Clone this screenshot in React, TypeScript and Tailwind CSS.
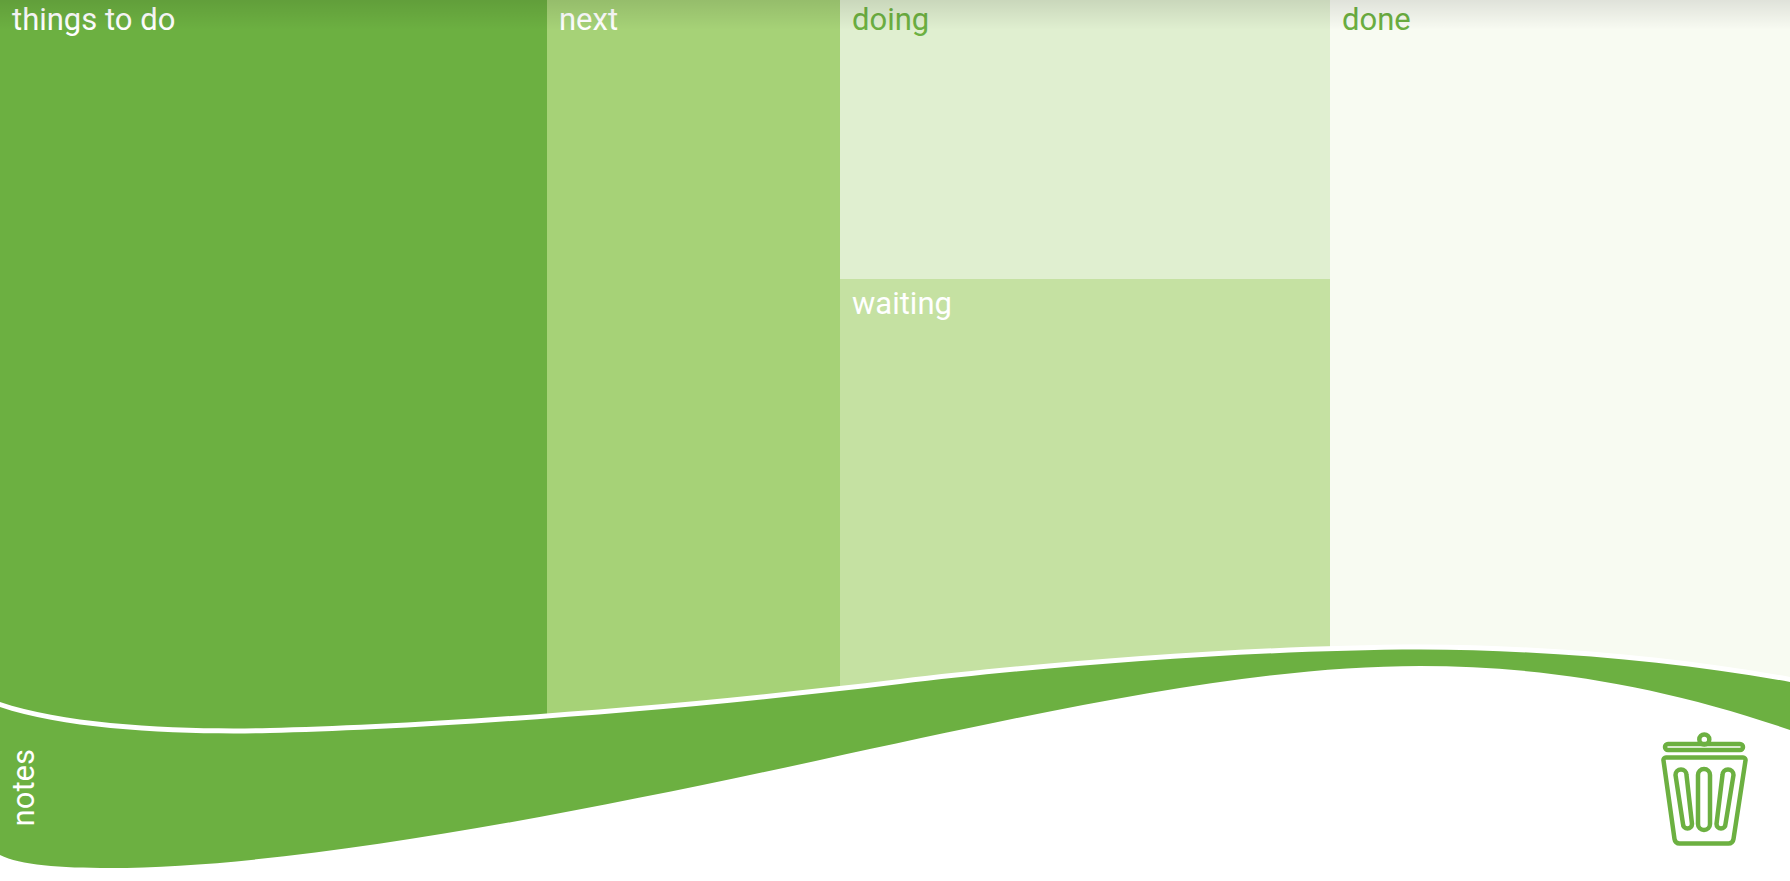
const TOP_EDGE =
  "M0 707C70 731 190 735 270 733C400 730 640 715.500 900 684C1040 667 1250 650 1420 649.5C1550 650 1680 662 1790 682";

function Column({ label, dark, className }: { label: string; dark?: boolean; className: string }) {
  return (
    <div className={`px-3 text-[31px] leading-[40px] ${dark ? "text-[#6cb041]" : "text-white"} ${className}`}>
      {label}
    </div>
  );
}

function TrashIcon() {
  return (
    <svg viewBox="0 0 90 116" className="absolute left-[1660px] top-[731px] h-[116px] w-[90px]" fill="none" stroke="#6cb041" strokeWidth="4.500" strokeLinejoin="round">
      <rect x="5" y="13" width="78" height="6" rx="3" />
      <circle cx="44.300" cy="8.500" r="5" />
      <path d="M6 26.500h77a2.500 2.500 0 0 1 2.500 3l-12 78.500a5 5 0 0 1-5 4.500h-49a5 5 0 0 1-5-4.500l-11-78.500a2.500 2.500 0 0 1 2.500-3z" />
      <path d="M15.500 44a5.500 5.500 0 0 1 11 0l5.500 49a4.500 4.500 0 0 1-9 0z" />
      <path d="M38 44a6 6 0 0 1 12 0v49a6 6 0 0 1-12 0z" />
      <path d="M62.500 44a5.500 5.500 0 0 1 11 0l-8 49a4.500 4.500 0 0 1-9 0z" />
    </svg>
  );
}

export default function App() {
  return (
    <div className="relative h-[881px] w-[1790px] overflow-hidden bg-white font-['Roboto',sans-serif]">
      <div className="flex h-full">
        <Column label="things to do" className="w-[547px] bg-[#6cb041]" />
        <Column label="next" className="w-[293px] bg-[#a6d277]" />
        <div className="flex w-[490px] flex-col">
          <Column label="doing" dark className="h-[279px] bg-[#e0efd0]" />
          <Column label="waiting" className="flex-1 bg-[#c5e1a2] pt-[5px]" />
        </div>
        <Column label="done" dark className="flex-1 bg-[#f8fbf2]" />
      </div>

      {/* shadow from the app bar above */}
      <div className="pointer-events-none absolute inset-x-0 top-0 h-[30px] bg-gradient-to-b from-black/10 to-transparent" />

      {/* wave: white cut-out with the green notes band on top */}
      <svg viewBox="0 0 1790 881" className="absolute inset-0 h-[881px] w-[1790px]">
        <path d={`${TOP_EDGE}V900H0Z`} fill="#fff" transform="translate(0 -5)" />
        <path
          d={`${TOP_EDGE}V730C1660 685 1540 666 1420 666C1250 666 1050 710 820 760C600 808 300 868 110 868C60 868 20 865 0 855Z`}
          fill="#6cb041"
        />
      </svg>

      <div className="absolute left-[7px] top-[749px] rotate-180 text-[31px] leading-[34px] text-white [writing-mode:vertical-rl]">
        notes
      </div>
      <TrashIcon />
    </div>
  );
}
